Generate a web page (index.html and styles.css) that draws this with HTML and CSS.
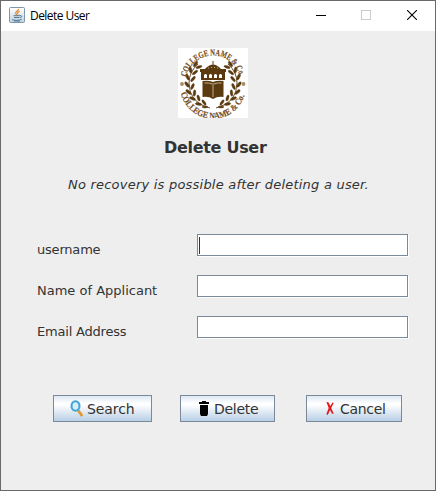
FILE: index.html
```html
<!DOCTYPE html>
<html lang="en">
<head>
<meta charset="utf-8">
<title>Delete User</title>
<link rel="stylesheet" href="styles.css">
</head>
<body>
<div class="window">
  <header class="titlebar">
    <svg class="app-icon" width="16" height="16" viewBox="0 0 16 16">
      <defs><linearGradient id="tile" x1="0" y1="0" x2="0" y2="1"><stop offset="0" stop-color="#fff"/><stop offset="1" stop-color="#c3d0dc"/></linearGradient></defs>
      <rect x=".5" y=".5" width="15" height="15" rx="1" fill="url(#tile)" stroke="#7f97ab"/>
      <path d="M9.6 1.8C10 4 6 4.600 6.700 6.200C7 7 7.600 7.400 7.600 8M10.600 4.200C8.500 5 8.300 6 9 7.500" fill="none" stroke="#e8862e" stroke-width="1.200"/>
      <path d="M4.500 8.700h6.500M5 10.500h5.500M11 8.700c2.500-.5 2 1.800 0 2M3.300 12.600c2 1 7 1 9.200-.3M5 14h6" fill="none" stroke="#4f7894"/>
    </svg>
    <span class="caption">Delete User</span>
    <div class="controls">
      <svg width="10" height="10" viewBox="0 0 10 10"><path d="M0 5.500h10" stroke="#000"/></svg>
      <svg width="10" height="10" viewBox="0 0 10 10"><rect x=".5" y=".5" width="9" height="9" fill="none" stroke="#ccc"/></svg>
      <svg class="close" width="10" height="10" viewBox="0 0 10 10"><path d="M0 0l10 10M10 0L0 10" stroke="#000" stroke-width="1.100"/></svg>
    </div>
  </header>
  <main class="content">
    <svg class="logo" width="70" height="70" viewBox="0 0 70 70">
      <defs>
        <path id="arc-top" d="M8.300 29A27.300 27.300 0 0 1 61.700 29"/>
        <path id="arc-bottom" d="M2.800 45A33 33 0 0 0 67.200 45"/>
        <g id="branch">
          <path d="M32 60Q11 55 11 35Q11 24 20 16" fill="none" stroke="#5b3a10" stroke-width=".9"/>
          <g fill="#5b3a10" stroke="#5b3a10" stroke-width=".4">
            <ellipse cx="17.500" cy="16" rx="3.200" ry="1.300" transform="rotate(-55 17.500 16)"/>
            <ellipse cx="21" cy="19" rx="3.200" ry="1.200" transform="rotate(-18 21 19)"/>
            <ellipse cx="12.500" cy="22" rx="3.200" ry="1.400" transform="rotate(-100 12.500 22)"/>
            <ellipse cx="17" cy="24.500" rx="3.200" ry="1.300" transform="rotate(-38 17 24.500)"/>
            <ellipse cx="9.500" cy="29" rx="3.200" ry="1.400" transform="rotate(65 9.500 29)"/>
            <ellipse cx="15" cy="31" rx="3.200" ry="1.300" transform="rotate(-50 15 31)"/>
            <ellipse cx="9" cy="36.500" rx="3.200" ry="1.400" transform="rotate(55 9 36.500)"/>
            <ellipse cx="14.500" cy="38.500" rx="3.200" ry="1.300" transform="rotate(-65 14.500 38.500)"/>
            <ellipse cx="10.500" cy="44" rx="3.200" ry="1.400" transform="rotate(40 10.500 44)"/>
            <ellipse cx="16.500" cy="45" rx="3.200" ry="1.300" transform="rotate(-85 16.500 45)"/>
            <ellipse cx="14.500" cy="50.500" rx="3.200" ry="1.400" transform="rotate(22 14.500 50.500)"/>
            <ellipse cx="20.500" cy="50" rx="3.200" ry="1.300" transform="rotate(75 20.500 50)"/>
            <ellipse cx="20.500" cy="56" rx="3.200" ry="1.300" transform="rotate(8 20.500 56)"/>
            <ellipse cx="26" cy="54.500" rx="3.200" ry="1.200" transform="rotate(55 26 54.500)"/>
            <ellipse cx="27" cy="59" rx="3" ry="1"/>
          </g>
        </g>
      </defs>
      <rect width="70" height="70" fill="#fff"/>
      <use href="#branch"/>
      <use href="#branch" transform="translate(70 0) scale(-1 1)"/>
      <g fill="#5b3a10">
        <path d="M34.500 13h1v4h-1zM27 21q8-9 16 0zM22 21h26v3h-1v8H23v-8h-1z"/>
        <path d="M24.500 33q6-1 10.500 1q4.500-2 10.500-1v16q-6-1-10.500 2q-4.500-3-10.500-2z"/>
      </g>
      <path d="M26 30v-3q1.500-2 3 0v3zM31 30v-3q1.500-2 3 0v3zM36 30v-3q1.500-2 3 0v3zM41 30v-3q1.500-2 3 0v3z" fill="#fff"/>
      <path d="M30 20h1M33 19.500h1M36 19.500h1M39 20h1M35 35v14M26.500 35q4.500-.5 7.500 1M36 36q3-1.500 7.500-1" stroke="#e9ddc9" fill="none" stroke-width=".7"/>
      <g fill="#a98a62"><circle cx="4" cy="36" r="1.900"/><circle cx="65.500" cy="36" r="1.900"/></g>
      <text class="seal"><textPath href="#arc-top" textLength="73" lengthAdjust="spacingAndGlyphs">COLLEGE NAME &amp; Co.</textPath></text>
      <text class="seal"><textPath href="#arc-bottom" textLength="86" lengthAdjust="spacingAndGlyphs">COLLEGE NAME &amp; Co.</textPath></text>
    </svg>
    <h1 class="heading">Delete User</h1>
    <p class="warning">No recovery is possible after deleting a user.</p>
    <div class="form">
      <div class="row"><label class="label tight">username</label><div class="field"><span class="caret"></span></div></div>
      <div class="row"><label class="label">Name of Applicant</label><div class="field"></div></div>
      <div class="row"><label class="label tight">Email Address</label><div class="field"></div></div>
    </div>
    <div class="actions">
      <button class="button search"><svg width="14" height="18" viewBox="0 0 14 18"><path d="M8.200 10.500l4 5.500" stroke="#df982f" stroke-width="2.800"/><ellipse cx="5.500" cy="6" rx="4" ry="4.800" fill="#d9edf7" stroke="#42a5d5" stroke-width="2.100"/></svg><span>Search</span></button>
      <button class="button delete"><svg width="10" height="15" viewBox="0 0 10 15"><path d="M3 0h4v1h3v2H0V1h3zM1 4h8v9l-1 2H2l-1-2z" fill="#000"/></svg><span>Delete</span></button>
      <button class="button cancel"><svg width="8" height="13" viewBox="0 0 8 13"><path d="M.4 0l2 .3L4.300 4 6.500.5 7.700 1 5.200 6l2.600 6-2-.6L4 8l-2.200 5L.4 12 2.700 6z" fill="#e3171b"/></svg><span>Cancel</span></button>
    </div>
  </main>
</div>
</body>
</html>
```
FILE: styles.css
```css
* { box-sizing: border-box; }
body { margin: 0; }
.window {
  width: 436px;
  height: 491px;
  border: 1px solid #69696b;
  background: #eee;
  color: #333;
  font-family: "DejaVu Sans", sans-serif;
  overflow: hidden;
}
.titlebar {
  display: flex;
  align-items: center;
  height: 30px;
  padding: 0 18px 2px 8px;
  background: #fff;
}
.caption {
  margin-left: 5px;
  color: #000;
  font: 12px "Open Sans", sans-serif;
  letter-spacing: -0.55px;
}
.controls { display: flex; gap: 35px; margin-left: auto; }
.controls svg, .app-icon, .logo { display: block; }
.controls .close { margin-left: 1px; }
.content { padding-top: 17px; }
.logo { margin-left: 177px; }
.seal {
  font: bold 9px "Liberation Serif", serif;
  fill: #76501f;
  stroke: #76501f;
  stroke-width: .2px;
}
.heading {
  margin: 20px 0 0 163px;
  font-size: 16px;
  line-height: 20px;
  letter-spacing: -0.3px;
  white-space: nowrap;
}
.warning {
  margin: 19px 0 0 67px;
  font-size: 13px;
  font-style: italic;
  line-height: 16px;
  letter-spacing: 0.22px;
  white-space: nowrap;
}
.form { display: grid; gap: 19px; margin: 41px 0 0 36px; }
.row { display: grid; grid-template-columns: 160px 211px; height: 22px; }
.label { padding-top: 8px; font-size: 13px; line-height: 16px; white-space: nowrap; }
.tight { letter-spacing: -0.2px; }
.field {
  height: 22px;
  padding: 2px 1px;
  border: 1px solid #7a8a99;
  background: #fff;
  box-shadow: 1px 1px 0 #fff;
}
.caret { display: block; width: 1px; height: 17px; background: #333; }
.actions { display: flex; margin: 57px 0 0 52px; }
.button {
  display: flex;
  align-items: center;
  height: 27px;
  padding: 0;
  border: 1px solid #7a8a99;
  background: linear-gradient(#dde8f3, #fff 30%, #fff 35%, #b8cfe5);
  color: #333;
  font: 14px "DejaVu Sans", sans-serif;
  letter-spacing: -0.3px;
  white-space: nowrap;
}
.search { width: 99px; padding-left: 16px; gap: 3px; letter-spacing: -0.1px; }
.delete { width: 95px; margin-left: 28px; padding-left: 18px; gap: 5px; }
.cancel { width: 96px; margin-left: 31px; padding-left: 19px; gap: 6px; }
```
